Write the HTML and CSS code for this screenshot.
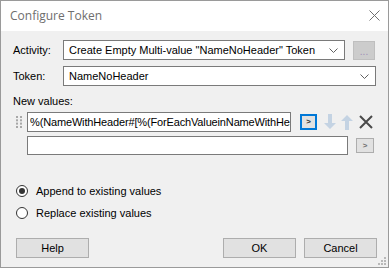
FILE: index.html
```html
<!DOCTYPE html>
<html>
<head>
<meta charset="utf-8">
<link rel="stylesheet" href="styles.css">
</head>
<body>
<div class="window">
  <div class="titlebar">
    <span class="title">Configure Token</span>
    <svg class="close" width="11" height="11" viewBox="0 0 11 11"><path d="M0.5 0.5L10.5 10.5M10.5 0.5L0.5 10.5" stroke="#707070" stroke-width="1" fill="none"/></svg>
  </div>
  <div class="content">
    <div class="row row-activity">
      <span class="label">Activity:</span>
      <div class="combo combo-activity"><span class="combo-text">Create Empty Multi-value "NameNoHeader" Token</span><svg class="chev" width="9" height="5" viewBox="0 0 9 5"><path d="M0.5 0.5L4.5 4.5L8.5 0.5" stroke="#606060" fill="none"/></svg></div>
      <div class="btn-ellipsis">...</div>
    </div>
    <div class="row row-token">
      <span class="label">Token:</span>
      <div class="combo combo-token"><span class="combo-text">NameNoHeader</span><svg class="chev" width="9" height="5" viewBox="0 0 9 5"><path d="M0.5 0.5L4.5 4.5L8.5 0.5" stroke="#606060" fill="none"/></svg></div>
    </div>
    <div class="new-label">New values:</div>
    <div class="vrow vrow-1">
      <svg class="grip" width="6" height="12" viewBox="0 0 6 12">
        <g fill="#a8a8a8">
          <rect x="0" y="0" width="2" height="2"/><rect x="4" y="0" width="2" height="2"/>
          <rect x="0" y="3.3" width="2" height="2"/><rect x="4" y="3.3" width="2" height="2"/>
          <rect x="0" y="6.6" width="2" height="2"/><rect x="4" y="6.6" width="2" height="2"/>
          <rect x="0" y="10" width="2" height="2"/><rect x="4" y="10" width="2" height="2"/>
        </g>
      </svg>
      <div class="textbox tb-1"><span class="tb-text">%(NameWithHeader#[%(ForEachValueinNameWithHeader</span></div>
      <div class="btn-small focused">&gt;</div>
      <svg class="arrow" width="14" height="16" viewBox="0 0 14 16"><path d="M5 0H9V9H13L7 15L1 9H5Z" fill="#c4d3e3"/></svg>
      <svg class="arrow arrow-up" width="14" height="16" viewBox="0 0 14 16"><path d="M5 16H9V7H13L7 1L1 7H5Z" fill="#c4d3e3"/></svg>
      <svg class="xicon" width="14" height="14" viewBox="0 0 14 14"><path d="M1 1L13 13M13 1L1 13" stroke="#4a4a4a" stroke-width="2" fill="none"/></svg>
    </div>
    <div class="vrow vrow-2">
      <div class="textbox tb-2"></div>
      <div class="btn-small btn-small-2">&gt;</div>
    </div>
    <div class="radios">
      <label class="radio-row"><span class="radio checked"><span class="dot"></span></span><span class="radio-text">Append to existing values</span></label>
      <label class="radio-row"><span class="radio"></span><span class="radio-text">Replace existing values</span></label>
    </div>
    <div class="buttons">
      <div class="btn">Help</div>
      <div class="spacer"></div>
      <div class="btn">OK</div>
      <div class="btn">Cancel</div>
    </div>
  </div>
  <svg class="sizegrip" width="8" height="8" viewBox="0 0 8 8"><g fill="#b8b8b8"><rect x="6" y="0" width="2" height="2"/><rect x="3" y="3" width="2" height="2"/><rect x="6" y="3" width="2" height="2"/><rect x="0" y="6" width="2" height="2"/><rect x="3" y="6" width="2" height="2"/><rect x="6" y="6" width="2" height="2"/></g></svg>
</div>
</body>
</html>
```
FILE: styles.css
```css
html, body {
  margin: 0;
  padding: 0;
  background: #ffffff;
}
.window {
  position: relative;
  width: 387px;
  height: 266px;
  border: 1px solid #9a9a9a;
  background: #f0f0f0;
  font-family: "Liberation Sans", Arial, sans-serif;
  font-size: 11px;
  color: #000;
  overflow: hidden;
}
.titlebar {
  height: 30px;
  background: #ffffff;
  display: flex;
  align-items: center;
  justify-content: space-between;
  padding: 0 8px 0 9px;
}
.title {
  font-family: "Open Sans", "Noto Sans", sans-serif;
  font-size: 12px;
  color: #6e6e6e;
  margin-top: -1px;
}
.close {
  margin-top: -1px;
}
.content {
  padding: 9px 0 0 12px;
}
.row {
  display: flex;
  align-items: center;
  height: 20px;
}
.row-token {
  margin-top: 6px;
}
.label {
  width: 50px;
  flex: none;
}
.combo {
  box-sizing: border-box;
  height: 20px;
  border: 1px solid #7a7a7a;
  background: #fff;
  display: flex;
  align-items: center;
  justify-content: space-between;
  padding: 0 6px 0 5px;
}
.combo-activity {
  width: 282px;
}
.combo-token {
  width: 313px;
}
.combo-text {
  white-space: nowrap;
}
.chev {
  flex: none;
}
.btn-ellipsis {
  box-sizing: border-box;
  width: 22px;
  height: 19px;
  margin-left: 8px;
  border: 1px solid #bfbfbf;
  background: #cccccc;
  color: #a08cb8;
  text-align: center;
  line-height: 20px;
  font-size: 10px;
}
.new-label {
  margin-top: 9px;
  height: 13px;
  line-height: 13px;
  white-space: nowrap;
}
.vrow {
  display: flex;
  align-items: center;
}
.vrow-1 {
  margin-top: 4px;
  height: 20px;
}
.grip {
  margin-left: 3px;
  margin-right: 5px;
  flex: none;
}
.textbox {
  box-sizing: border-box;
  height: 20px;
  border: 1px solid #7a7a7a;
  background: #fff;
  padding: 0 0 0 2px;
  display: flex;
  align-items: center;
  overflow: hidden;
  flex: none;
}
.tb-1 {
  width: 264px;
}
.tb-text {
  white-space: nowrap;
  overflow: hidden;
  flex: 1;
  min-width: 0;
  letter-spacing: -0.15px;
}
.btn-small {
  box-sizing: border-box;
  width: 17px;
  height: 16px;
  margin-left: 9px;
  border: 1px solid #adadad;
  background: #e1e1e1;
  font-size: 8px;
  font-weight: bold;
  text-align: center;
  line-height: 14px;
  color: #303030;
  flex: none;
}
.btn-small.focused {
  border: 2px solid #0078d7;
  line-height: 12px;
}
.arrow {
  margin-left: 6px;
  flex: none;
}
.arrow-up {
  margin-left: 3px;
}
.xicon {
  margin-left: 5px;
  flex: none;
}
.vrow-2 {
  margin-top: 4px;
  padding-left: 14px;
  height: 19px;
}
.tb-2 {
  width: 321px;
  height: 19px;
}
.btn-small-2 {
  width: 18px;
  height: 15px;
  margin-left: 8px;
  line-height: 13px;
  color: #707070;
}
.radios {
  margin-top: 29px;
  display: flex;
  flex-direction: column;
  gap: 9px;
}
.radio-row {
  display: flex;
  align-items: center;
  height: 13px;
  padding-left: 3px;
}
.radio {
  box-sizing: border-box;
  width: 12px;
  height: 12px;
  border: 1px solid #333;
  border-radius: 50%;
  background: #fff;
  display: flex;
  align-items: center;
  justify-content: center;
  margin-right: 8px;
}
.dot {
  width: 6px;
  height: 6px;
  border-radius: 50%;
  background: #333;
}
.buttons {
  margin-top: 19px;
  display: flex;
  padding-left: 3px;
  padding-right: 11px;
  gap: 8px;
}
.spacer {
  flex: 1;
}
.btn {
  box-sizing: border-box;
  width: 73px;
  height: 20px;
  border: 1px solid #adadad;
  background: #e1e1e1;
  text-align: center;
  line-height: 18px;
}
.sizegrip {
  position: absolute;
  right: 2px;
  bottom: 2px;
}
```
